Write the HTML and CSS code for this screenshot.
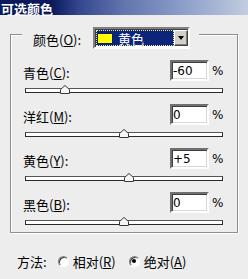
FILE: index.html
```html
<!DOCTYPE html>
<html lang="zh-CN">
<head>
    <meta charset="UTF-8">
    <meta name="viewport" content="width=device-width, initial-scale=1.0">
    <title>可选颜色</title>
    <link rel="stylesheet" href="styles.css">
</head>
<body>
    <div class="titlebar"><span class="title-text">可选颜色</span></div>

    <div class="group">
        <div class="group-head">
            <span class="head-label">颜色(<u>O</u>):</span>
            <div class="select">
                <div class="select-value">
                    <span class="swatch"></span>
                    <span class="select-text">黄色</span>
                </div>
                <div class="select-btn"><span class="arrow"></span></div>
            </div>
        </div>

        <div class="row">
            <div class="row-top">
                <span class="label">青色(<u>C</u>):</span>
                <input class="num" type="text" value="-60">
                <span class="pct">%</span>
            </div>
            <div class="slider">
                <div class="track"></div>
                <svg class="thumb" style="left: 20%" width="10" height="9" viewBox="0 0 10 9"><polygon points="0.5,8.5 0.5,4.5 5,0.5 9.5,4.5 9.5,8.5" /></svg>
            </div>
        </div>

        <div class="row">
            <div class="row-top">
                <span class="label">洋红(<u>M</u>):</span>
                <input class="num" type="text" value="0">
                <span class="pct">%</span>
            </div>
            <div class="slider">
                <div class="track"></div>
                <svg class="thumb" style="left: 50%" width="10" height="9" viewBox="0 0 10 9"><polygon points="0.5,8.5 0.5,4.5 5,0.5 9.5,4.5 9.5,8.5" /></svg>
            </div>
        </div>

        <div class="row">
            <div class="row-top">
                <span class="label">黄色(<u>Y</u>):</span>
                <input class="num" type="text" value="+5">
                <span class="pct">%</span>
            </div>
            <div class="slider">
                <div class="track"></div>
                <svg class="thumb" style="left: 52.5%" width="10" height="9" viewBox="0 0 10 9"><polygon points="0.5,8.5 0.5,4.5 5,0.5 9.5,4.5 9.5,8.5" /></svg>
            </div>
        </div>

        <div class="row">
            <div class="row-top">
                <span class="label">黑色(<u>B</u>):</span>
                <input class="num" type="text" value="0">
                <span class="pct">%</span>
            </div>
            <div class="slider">
                <div class="track"></div>
                <svg class="thumb" style="left: 50%" width="10" height="9" viewBox="0 0 10 9"><polygon points="0.5,8.5 0.5,4.5 5,0.5 9.5,4.5 9.5,8.5" /></svg>
            </div>
        </div>
    </div>

    <div class="method">
        <span class="method-label">方法:</span>
        <span class="radio"></span>
        <span class="radio-text">相对(<u>R</u>)</span>
        <span class="radio checked"></span>
        <span class="radio-text">绝对(<u>A</u>)</span>
    </div>
</body>
</html>
```

FILE: styles.css
```css
body {
    margin: 0;
    width: 248px;
    height: 279px;
    overflow: hidden;
    background-color: #ededed;
    font-family: "Noto Sans CJK SC", "Liberation Sans", sans-serif;
    font-size: 13px;
    color: #000;
}

u {
    text-decoration: underline;
}

.titlebar {
    height: 15px;
    display: flex;
    align-items: center;
    padding-left: 1px;
    background: linear-gradient(to right, #0a1a5c 0%, #0a1a5c 21%, #34478f 32%, #6275ad 50%, #8597c5 70%, #a9b7d6 88%, #c3cde0 100%);
}

.title-text {
    color: #fff;
    font-weight: bold;
    font-size: 13px;
    line-height: 13px;
    margin-top: 1px;
}

/* group box */
.group {
    position: relative;
    margin: 19px 0 0 10px;
    width: 228px;
    box-sizing: border-box;
    padding: 25px 15px 6px 12px;
    border: 1px solid #8e8e8e;
    box-shadow: inset 1px 1px #fff, 1px 1px #fff;
}

.group-head {
    position: absolute;
    top: -8px;
    left: 11px;
    height: 22px;
    padding: 0 9px 0 11px;
    display: flex;
    align-items: flex-start;
    background-color: #ededed;
}

.head-label {
    margin-top: 6px;
    line-height: 13px;
}

.select {
    margin-left: 12px;
    width: 97px;
    height: 22px;
    box-sizing: border-box;
    display: flex;
    padding: 1px 0 1px 1px;
    border: 2px solid;
    border-color: #808080 #fff #fff #808080;
    box-shadow: inset 1px 1px #404040;
    background-color: #fff;
}

.select-value {
    flex: 1;
    display: flex;
    align-items: center;
    padding-left: 1px;
    background-color: #0c2479;
    outline: 1px dotted #e8e8a0;
    outline-offset: -1px;
}

.swatch {
    width: 16px;
    height: 11px;
    box-sizing: border-box;
    background-color: #ffff00;
    border: 1px solid #102060;
}

.select-text {
    margin-left: 5px;
    color: #fff;
    line-height: 13px;
}

.select-btn {
    width: 14px;
    box-sizing: border-box;
    display: flex;
    align-items: center;
    justify-content: center;
    background-color: #d4d0c8;
    border: 1px solid;
    border-color: #fff #404040 #404040 #fff;
    box-shadow: inset -1px -1px #808080;
}

.arrow {
    width: 0;
    height: 0;
    border-left: 3.5px solid transparent;
    border-right: 3.5px solid transparent;
    border-top: 4px solid #000;
}

/* slider rows */
.row + .row {
    margin-top: 10px;
}

.row-top {
    height: 21px;
    display: flex;
    align-items: center;
}

.label {
    flex: 1;
    margin-top: 4px;
    line-height: 13px;
}

.num {
    width: 39px;
    height: 21px;
    box-sizing: border-box;
    margin: 0;
    padding: 0 0 0 1px;
    border: 2px solid;
    border-color: #707070 #fff #fff #707070;
    box-shadow: inset 1px 1px #404040, inset -1px -1px #d8d8d8;
    background-color: #fff;
    font-family: "DejaVu Sans", sans-serif;
    font-size: 12px;
    color: #000;
    outline: none;
}

.pct {
    width: 10px;
    margin-left: 3px;
    font-family: "DejaVu Sans", sans-serif;
    font-size: 12px;
}

.slider {
    position: relative;
    height: 13px;
    margin: 0 -1px 0 2px;
}

.track {
    position: absolute;
    left: 0;
    right: 0;
    top: 7px;
    height: 5px;
    box-sizing: border-box;
    border: 1px solid #2a2a2a;
    border-top-color: #555;
    background-color: #fff;
}

.thumb {
    position: absolute;
    top: 4px;
    margin-left: -5px;
}

.thumb polygon {
    fill: #f6f6f6;
    stroke: #3a3a3a;
    stroke-width: 1;
}

/* method row */
.method {
    margin-top: 18px;
    padding-left: 17px;
    height: 20px;
    display: flex;
    align-items: center;
}

.method-label {
    margin-right: 11px;
}

.radio {
    width: 11px;
    height: 11px;
    box-sizing: border-box;
    border-radius: 50%;
    border: 1px solid;
    border-color: #808080 #fff #fff #808080;
    box-shadow: inset 1px 1px #404040;
    background-color: #fff;
    display: flex;
    align-items: center;
    justify-content: center;
}

.radio.checked::after {
    content: "";
    width: 4px;
    height: 4px;
    border-radius: 50%;
    background-color: #000;
}

.radio-text {
    margin-left: 4px;
    margin-right: 13px;
}
```
